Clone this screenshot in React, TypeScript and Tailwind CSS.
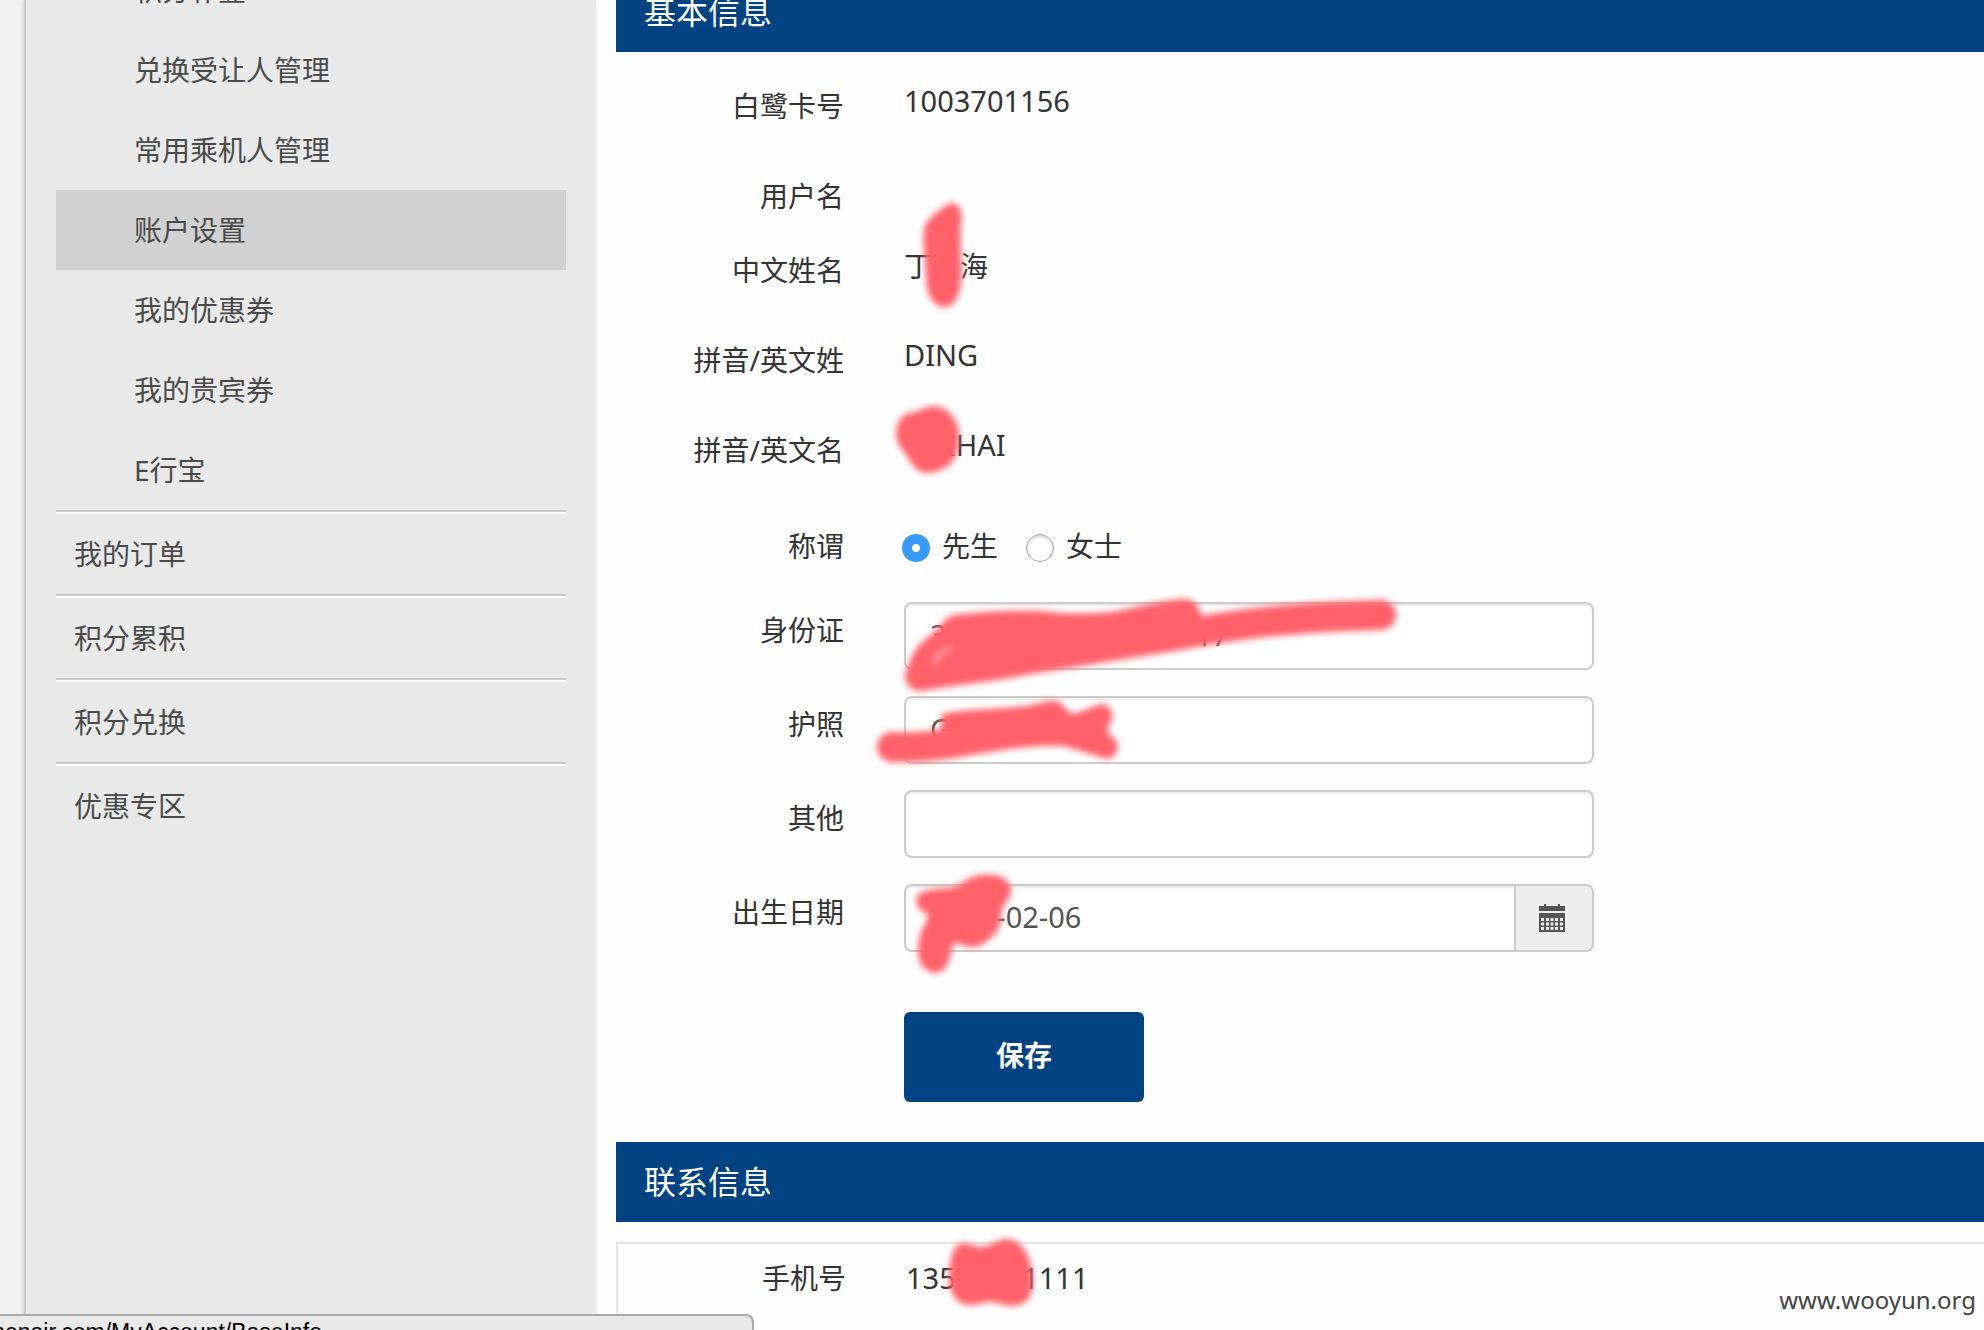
import React, { useState } from 'react';

const subItems = ['积分补登', '兑换受让人管理', '常用乘机人管理', '账户设置', '我的优惠券', '我的贵宾券', 'E行宝'];
const groups = ['我的订单', '积分累积', '积分兑换', '优惠专区'];

/* Figure spaces keep the width of the digits hidden by a marker. */
const hidden = (digits: number) => '\u2007'.repeat(digits);

/* A soft red marker stroke laid over a private value. */
function Marker({ fill, stroke, children }: { fill?: string; stroke?: string; children?: React.ReactNode }) {
  return (
    <svg aria-hidden="true" width="1" height="1" className="pointer-events-none absolute left-0 top-0 z-10 overflow-visible">
      <g className="blur-[3px]">
        {fill && <path d={fill} fill="#ff616b" stroke="#ff616b" strokeWidth="4" strokeLinejoin="round" />}
        {stroke && (
          <path d={stroke} fill="none" stroke="#ff616b" strokeWidth="30" strokeLinecap="round" strokeLinejoin="round" />
        )}
        {children}
      </g>
    </svg>
  );
}

function CalendarIcon() {
  return (
    <svg aria-hidden="true" width="26" height="28" viewBox="0 0 26 28" fill="#555">
      <path d="M5 0h2v2h12V0h2v2h5v5H0V2h5z" />
      <path
        fillRule="evenodd"
        d="M0 9h26v19H0z M2 14v3h3v-3z M7 14v3h3v-3z M11.500 14v3h3v-3z M16 14v3h3v-3z M21 14v3h3v-3z M2 18.500v3h3v-3z M7 18.500v3h3v-3z M11.500 18.500v3h3v-3z M16 18.500v3h3v-3z M21 18.500v3h3v-3z M2 23v3h3v-3z M7 23v3h3v-3z M11.500 23v3h3v-3z M16 23v3h3v-3z M21 23v3h3v-3z"
      />
    </svg>
  );
}

const rowGrid = 'grid grid-cols-[228px_minmax(0,1fr)] gap-x-[60px]';

function StaticRow({ label, className, children }: { label: string; className: string; children?: React.ReactNode }) {
  return (
    <div className={`${rowGrid} ${className}`}>
      <dt className="pt-1 text-right">{label}</dt>
      <dd className="relative text-[29px] leading-[38px]">{children}</dd>
    </div>
  );
}

const inputBox =
  'h-[68px] w-full min-w-0 border-2 border-[#ccc] bg-white px-6 pb-1 text-[29px] text-[#555] shadow-[inset_0_2px_2px_rgba(0,0,0,0.075)] outline-none';

function InputRow({ id, label, value, children }: { id: string; label: string; value: string; children?: React.ReactNode }) {
  const [text, setText] = useState(value);
  return (
    <div className={`${rowGrid} h-[94px]`}>
      <label htmlFor={id} className="pt-2 text-right">{label}</label>
      <div className="relative max-w-[690px]">
        <input id={id} type="text" value={text} onChange={(e) => setText(e.target.value)} className={`${inputBox} rounded-lg`} />
        {children}
      </div>
    </div>
  );
}

function SectionTitle({ children }: { children: React.ReactNode }) {
  return <h2 className="bg-[#004282] pl-7 text-[32px] leading-[80px] text-white">{children}</h2>;
}

function Radio({ label, value, current, onPick }: { label: string; value: string; current: string; onPick: (v: string) => void }) {
  return (
    <label className="flex items-center gap-3">
      <input
        type="radio"
        name="title"
        value={value}
        checked={current === value}
        onChange={() => onPick(value)}
        className="mt-1 size-7 appearance-none rounded-full border border-[#aaa] bg-white shadow-[inset_0_2px_3px_rgba(0,0,0,0.15)] checked:border-[10px] checked:border-[#3b99fc] checked:shadow-none"
      />
      {label}
    </label>
  );
}

export default function App() {
  const [title, setTitle] = useState('mr');
  const [birth, setBirth] = useState(`${hidden(4)}-02-06`);

  return (
    <div className="relative flex h-screen overflow-hidden bg-[#fefefe] font-['Noto_Sans','Noto_Sans_CJK_SC',sans-serif] text-[28px] leading-10 text-[#333]">
      <div className="w-6 shrink-0 bg-[#f2f2f2]" />
      <aside className="w-[572px] shrink-0 border-l-2 border-[#ccc] bg-[#e9e9e9] px-[30px] text-[#4a4a4a] shadow-[-1px_0_4px_rgba(0,0,0,0.15)]">
        <nav className="-mt-[50px]">
          <ul>
            {subItems.map((item) => (
              <li key={item}>
                <a
                  href="#"
                  aria-current={item === '账户设置' ? 'page' : undefined}
                  className="block h-20 pl-[78px] leading-[80px] aria-[current=page]:bg-[#d1d1d1]"
                >
                  {item}
                </a>
              </li>
            ))}
          </ul>
          <ul>
            {groups.map((item) => (
              <li key={item} className="border-t-2 border-[#c8c8c8]">
                <a href="#" className="block border-t-2 border-white pl-[18px] leading-[80px]">{item}</a>
              </li>
            ))}
          </ul>
        </nav>
      </aside>

      <main className="-mt-7 min-w-0 flex-1 pl-5">
        <section>
          <SectionTitle>基本信息</SectionTitle>
          <form onSubmit={(e) => e.preventDefault()} className="pb-10 pt-[30px]">
            <dl>
              <StaticRow label="白鹭卡号" className="h-[90px]">1003701156</StaticRow>
              <StaticRow label="用户名" className="h-[74px]" />
              <StaticRow label="中文姓名" className="h-[90px]">
                <span className="text-[28px] leading-10">丁{'\u3000'}海</span>
                <Marker fill="M46 -41C54 -42 57 -34 55 -22C53 0 57 20 55 38C52 54 46 60 39 59C30 58 25 48 24 34C24 18 20 -2 22 -17C25 -28 36 -33 46 -41Z" />
              </StaticRow>
              <StaticRow label="拼音/英文姓" className="h-[90px]">DING</StaticRow>
              <StaticRow label="拼音/英文名" className="h-[96px]">
                <span className="pl-[42px]">IHAI</span>
                <Marker fill="M-6 8C-6 -4 0 -12 12 -12C20 -16 30 -21 40 -15C52 -7 54 4 53 16C52 34 43 41 30 44C18 48 10 40 4 28C-2 20 -6 16 -6 8Z" />
              </StaticRow>
            </dl>
            <div role="radiogroup" aria-labelledby="title-label" className={`${rowGrid} h-20`}>
              <span id="title-label" className="pt-1 text-right">称谓</span>
              <div className="-ml-0.5 flex items-start gap-7 pt-1">
                <Radio label="先生" value="mr" current={title} onPick={setTitle} />
                <Radio label="女士" value="ms" current={title} onPick={setTitle} />
              </div>
            </div>

            <InputRow id="id-card" label="身份证" value={`3${hidden(15)}17`}>
              <Marker
                fill="M6 66C9 50 20 40 31 32C38 27 40 18 50 15C80 11 110 10 140 11C160 15 200 14 220 10C240 5 260 0 280 -1C292 -1 296 10 296 24L250 40L100 66L30 78L6 76Z"
                stroke="M16 74C60 66 90 65 120 58C170 50 220 42 270 34C340 20 400 15 477 13"
              >
                <path d="M30 60Q35 50 46 47" fill="none" stroke="#ff9ba2" strokeWidth="5" strokeLinecap="round" />
              </Marker>
            </InputRow>
            <InputRow id="passport" label="护照" value="G">
              <Marker
                fill="M39 20C60 14 100 16 128 11C140 8 150 4 156 9C162 16 164 20 172 19C184 16 192 10 200 10C208 14 208 24 202 30C200 36 204 40 211 46C213 52 210 60 204 61C190 58 180 52 150 46L40 50Z"
                stroke="M-12 51C30 53 60 44 92 40C130 34 150 34 170 36"
              />
            </InputRow>
            <InputRow id="other" label="其他" value="" />
            <div className={`${rowGrid} h-[94px]`}>
              <label htmlFor="birth" className="pt-2 text-right">出生日期</label>
              <div className="relative flex max-w-[690px] items-start">
                <input
                  id="birth"
                  type="text"
                  value={birth}
                  onChange={(e) => setBirth(e.target.value)}
                  className={`${inputBox} rounded-l-lg border-r-0`}
                />
                <button
                  type="button"
                  aria-label="选择日期"
                  className="flex h-[68px] w-20 shrink-0 items-center justify-center rounded-r-lg border-2 border-[#ccc] bg-[#eee] pr-1"
                >
                  <CalendarIcon />
                </button>
                <Marker fill="M16 11C28 5 44 8 56 3C64 -5 76 -9 90 -7C104 -5 108 6 103 13C98 22 95 22 95 30C96 44 88 52 75 60C64 63 56 58 50 56C44 63 46 74 40 82C34 90 26 88 19 80C14 70 16 58 19 48C23 40 28 34 26 28C16 26 12 20 16 11Z" />
              </div>
            </div>
            <div className={`${rowGrid} mt-[34px]`}>
              <button
                type="submit"
                className="col-start-2 h-[90px] w-60 rounded-md bg-[#004282] pb-1 font-bold text-white"
              >
                保存
              </button>
            </div>
          </form>
        </section>

        <section>
          <SectionTitle>联系信息</SectionTitle>
          <dl className="mt-5 h-40 border-2 border-r-0 border-[#e5e5e5] pt-[14px]">
            <div className={rowGrid}>
              <dt className="text-right">手机号</dt>
              <dd className="relative text-[29px] leading-10">
                135{hidden(4)}1111
                <Marker fill="M45 22C45 4 48 -13 58 -13C66 -13 68 -8 76 -9C86 -10 92 -18 103 -17C118 -14 124 4 125 22C125 36 120 46 106 46C96 46 88 40 80 42C70 46 60 46 54 42C47 36 45 30 45 22Z" />
              </dd>
            </div>
          </dl>
        </section>
      </main>

      <div className="absolute bottom-0 left-0 z-20 h-4 w-[754px] overflow-hidden rounded-tr-lg border-r-2 border-t-2 border-[#aaa] bg-[#e9e9e9]">
        <div className="flex w-[322px] justify-end whitespace-nowrap pt-0.5 font-['Liberation_Sans',sans-serif] text-[23px] leading-7 text-black">
          xiamenair.com/MyAccount/BaseInfo
        </div>
      </div>
      <div className="absolute bottom-3.5 right-2 text-2xl text-[#444]">www.wooyun.org</div>
    </div>
  );
}
